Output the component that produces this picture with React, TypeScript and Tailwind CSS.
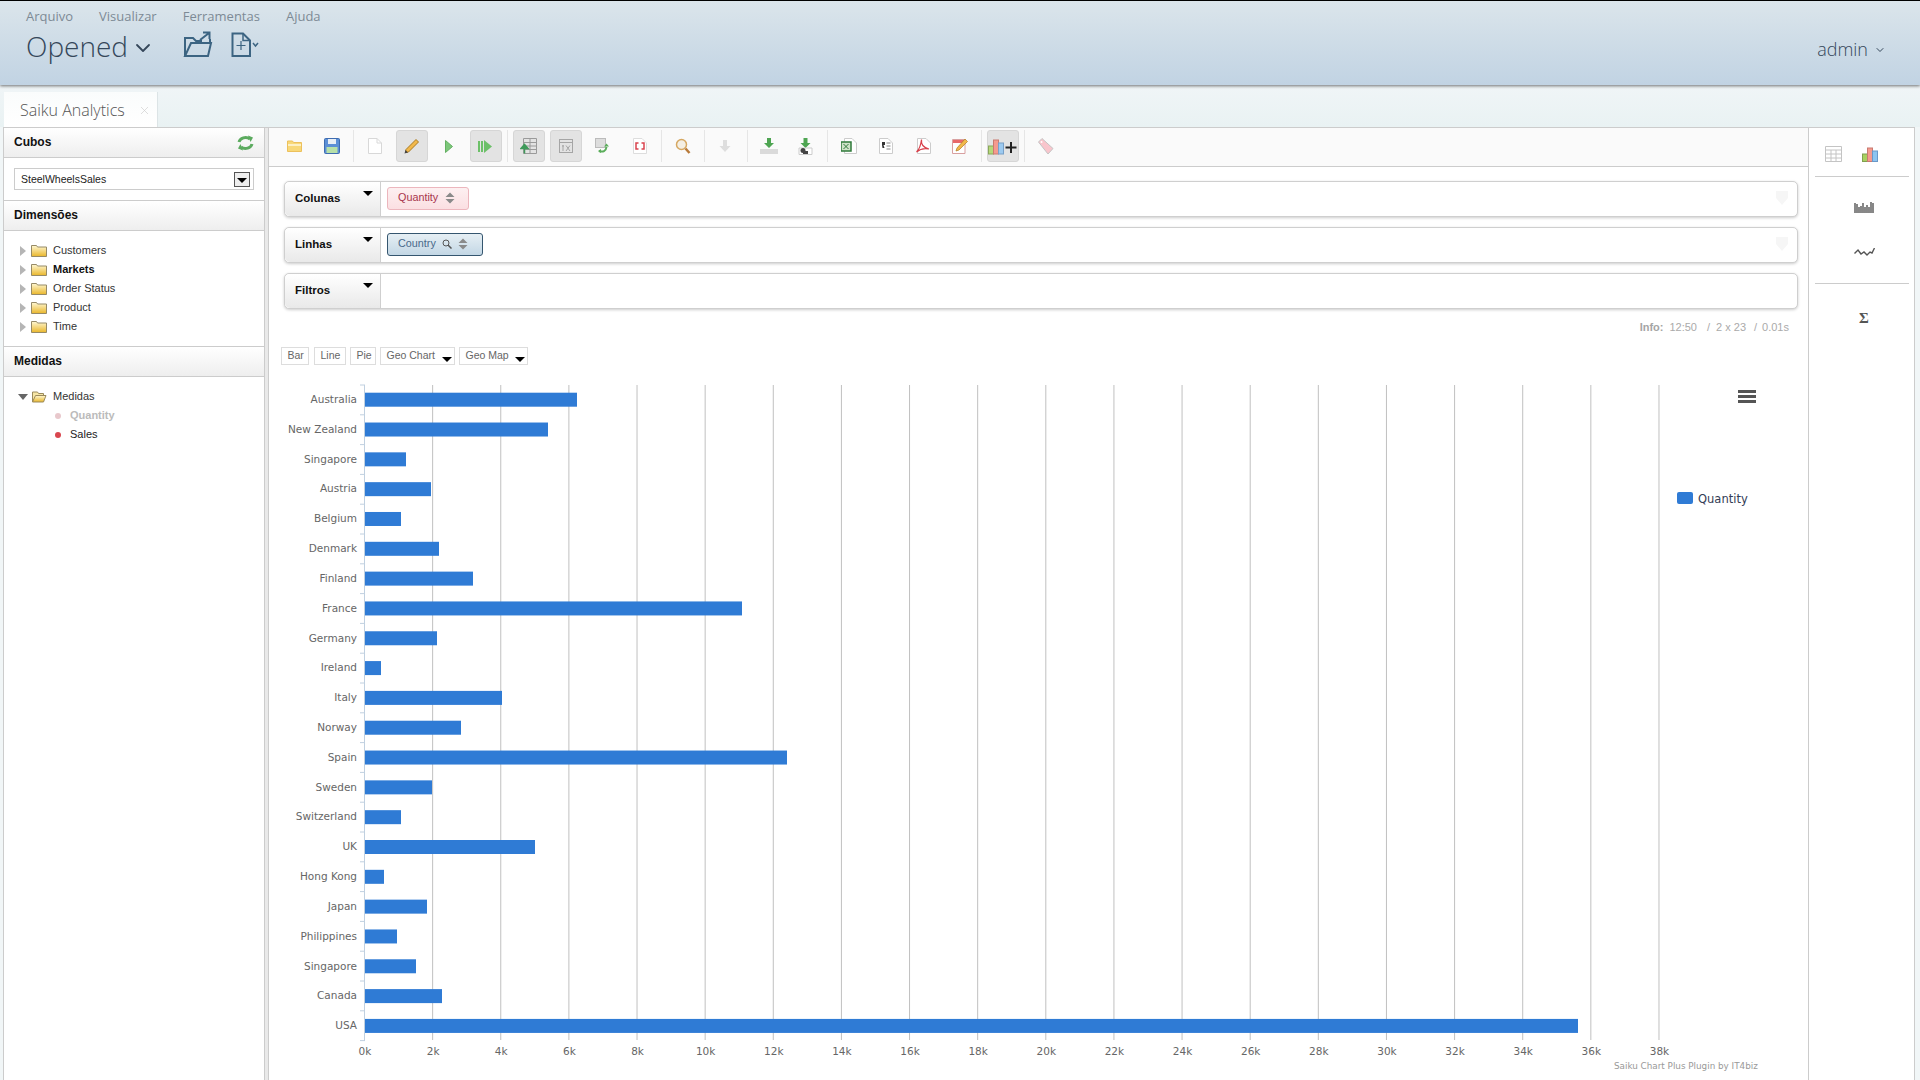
import { ChevronDown, X } from "lucide-react";

const menus = ["Arquivo", "Visualizar", "Ferramentas", "Ajuda"];

const bars: [string, number][] = [
  ["Australia", 577],
  ["New Zealand", 548],
  ["Singapore", 406],
  ["Austria", 431],
  ["Belgium", 401],
  ["Denmark", 439],
  ["Finland", 473],
  ["France", 742],
  ["Germany", 437],
  ["Ireland", 381],
  ["Italy", 502],
  ["Norway", 461],
  ["Spain", 787],
  ["Sweden", 432],
  ["Switzerland", 401],
  ["UK", 535],
  ["Hong Kong", 384],
  ["Japan", 427],
  ["Philippines", 397],
  ["Singapore", 416],
  ["Canada", 442],
  ["USA", 1578],
];

const dimensions = ["Customers", "Markets", "Order Status", "Product", "Time"];

function Tri({ className = "" }: { className?: string }) {
  return (
    <span
      className={`inline-block h-0 w-0 border-x-[5px] border-t-[5px] border-x-transparent border-t-black ${className}`}
    />
  );
}

function FolderIcon({ open = false }: { open?: boolean }) {
  return (
    <svg width="16" height="13" viewBox="0 0 16 13" className="shrink-0">
      <defs>
        <linearGradient id="fold" x1="0" y1="0" x2="0" y2="1">
          <stop offset="0" stopColor="#fff8d4" />
          <stop offset="1" stopColor="#e9b62a" />
        </linearGradient>
      </defs>
      {open ? (
        <>
          <path d="M1.500 12V2h5l1 1.500h5V6" fill="#f6e6a6" stroke="#9a8a5c" />
          <path d="M1.500 12L4.500 5.500H15L12.500 12z" fill="url(#fold)" stroke="#9a8a5c" />
        </>
      ) : (
        <path d="M.5 12.500V1.500h5l1 1.500h9v9.500z" fill="url(#fold)" stroke="#968a66" />
      )}
    </svg>
  );
}

function SideHeader({ title, children }: { title: string; children?: React.ReactNode }) {
  return (
    <div className="flex h-[30px] shrink-0 items-center justify-between border-b border-[#ccc] bg-gradient-to-b from-white to-[#eeeeee] px-[10px] pb-[2px] text-[12px] font-bold text-[#111]">
      <span>{title}</span>
      {children}
    </div>
  );
}

function ToolButton({ active, children }: { active?: boolean; children: React.ReactNode }) {
  return (
    <div className="flex h-[32px] w-[37px] shrink-0 items-center justify-center">
      <div
        className={`flex h-[32px] w-[32px] items-center justify-center rounded-[3px] ${
          active ? "border border-[#d6d6d6] bg-[#e3e3e3]" : ""
        }`}
      >
        {children}
      </div>
    </div>
  );
}

function Sep() {
  return (
    <div className="flex h-[32px] w-[6px] shrink-0 justify-center">
      <div className="h-full w-px bg-[#e6e6e6]" />
    </div>
  );
}

function UpDown() {
  return (
    <svg width="10" height="12" viewBox="0 0 10 12" className="shrink-0">
      <path d="M5 0.500L9.500 5H.5z M5 11.500L.5 7h9z" fill="#8a8a8a" />
    </svg>
  );
}

function DropZone({
  label,
  ghost,
  children,
}: {
  label: string;
  ghost?: boolean;
  children?: React.ReactNode;
}) {
  return (
    <div className="relative ml-[15px] mr-[10px] flex h-[36px] rounded-[5px] border border-[#cfcfcf] bg-white shadow-[0_1px_3px_rgba(0,0,0,0.2)]">
      <div className="relative flex w-[96px] shrink-0 items-center rounded-l-[5px] border-r border-[#cfcfcf] bg-gradient-to-b from-white to-[#e9e9e9] pl-[10px] text-[11.5px] font-bold text-[#111]">
        {label}
        <Tri className="absolute top-[9px] right-[7px] border-x-[4.5px]" />
      </div>
      <div className="flex items-center pb-[2px] pl-[6px]">{children}</div>
      {ghost && (
        <svg width="12" height="14" viewBox="0 0 12 14" className="absolute top-[9px] right-[9px]">
          <path d="M0 0h12v7l-6 7-6-7z" fill="#f6f6f6" />
        </svg>
      )}
    </div>
  );
}

function ChartButton({ width, label, menu }: { width: string; label: string; menu?: boolean }) {
  return (
    <div
      className={`relative flex h-[18px] items-center border border-[#ddd] bg-white pl-[5.5px] text-[10.5px] text-[#666] ${width}`}
    >
      {label}
      {menu && <Tri className="absolute right-[2px] bottom-[2px] border-x-[4px] border-t-[4px]" />}
    </div>
  );
}

function Chart() {
  const ticks = Array.from({ length: 20 }, (_, i) => i);
  return (
    <svg
      width="1539"
      height="710"
      viewBox="269 370 1539 710"
      className="block font-['DejaVu_Sans',sans-serif]"
    >
      {ticks.slice(1).map((i) => (
        <line
          key={i}
          x1={364.5 + i * 68.13}
          x2={364.5 + i * 68.13}
          y1={385}
          y2={1040}
          stroke="#c0c0c0"
        />
      ))}
      <line x1={364.5} x2={364.5} y1={385} y2={1041} stroke="#c0d0e0" />
      {Array.from({ length: 23 }, (_, i) => (
        <line key={i} x1={360} x2={365} y1={385 + i * 29.8} y2={385 + i * 29.8} stroke="#c0d0e0" />
      ))}
      {bars.map(([name, end], i) => (
        <g key={i}>
          <rect x={365} y={392.7 + i * 29.82} width={end - 365} height={14} fill="#2f7bd5" />
          <text x={357} y={403 + i * 29.82} textAnchor="end" fontSize="10.5" fill="#666">
            {name}
          </text>
        </g>
      ))}
      {ticks.map((i) => (
        <text
          key={i}
          x={365 + i * 68.13}
          y={1055}
          textAnchor="middle"
          fontSize="10.5"
          fill="#666"
        >
          {i * 2}k
        </text>
      ))}
      <text x={1614} y={1069} fontSize="8.8" fill="#999">
        Saiku Chart Plus Plugin by IT4biz
      </text>
      <rect x={1738} y={390} width={18} height={3} fill="#555" />
      <rect x={1738} y={395} width={18} height={3} fill="#555" />
      <rect x={1738} y={400} width={18} height={3} fill="#555" />
      <rect x={1677} y={492} width={16} height={12} rx={2} fill="#2f7bd5" />
      <text x={1698} y={503} fontSize="11.5" fill="#333c55">
        Quantity
      </text>
    </svg>
  );
}

export default function App() {
  return (
    <div className="flex h-screen w-full flex-col overflow-hidden bg-[#f1f6f7] font-['Liberation_Sans',Arial,sans-serif]">
      <header className="relative z-10 flex h-[85px] shrink-0 items-start justify-between border-t border-black bg-gradient-to-b from-[#dbe5eb] to-[#c1d3e3] font-['Open_Sans',sans-serif] shadow-[0_1px_3px_rgba(0,0,0,0.55)]">
        <div className="pl-[26px]">
          <div className="flex h-[32px] items-center gap-[26px] text-[13px] text-[#7d8a95]">
            {menus.map((m) => (
              <span key={m}>{m}</span>
            ))}
          </div>
          <div className="mt-[-2px] flex items-center">
            <span className="text-[28px] leading-[30px] font-light text-[#35475a]">Opened</span>
            <ChevronDown size={24} strokeWidth={1.8} className="mt-[3px] ml-[3px] text-[#35475a]" />
            <svg width="30" height="27" viewBox="0 0 30 27" className="mt-[-4px] ml-[28px]" fill="none" stroke="#3c6482" strokeWidth="2">
              <path d="M2 25V7h8l3 3h6" />
              <path d="M2 25H25L28 12H8L2 25z" />
              <path d="M17 9L26 2M20 1.500h6.500V8" />
              <path d="M27 8v4" />
            </svg>
            <svg width="28" height="25" viewBox="0 0 28 25" className="mt-[-3px] ml-[18px]" fill="none" stroke="#3c6482">
              <path d="M1.500 24V1.500H12L19 8.500V24z" strokeWidth="2" />
              <path d="M12 1.500V8.500H19" strokeWidth="1.500" />
              <path d="M10 9v9M5.500 13.500h9" strokeWidth="1.200" />
              <path d="M22 11l2.500 3 2.500-3" strokeWidth="1.500" />
            </svg>
          </div>
        </div>
        <div className="mt-[35px] flex items-center pr-[34px] text-[18px] leading-[26px] font-light text-[#35475a]">
          admin
          <ChevronDown size={12} strokeWidth={2} className="mt-[2px] ml-[6px]" />
        </div>
      </header>

      <div className="flex h-[42px] shrink-0 items-end bg-gradient-to-b from-[#f0f5f7] to-[#e9f2f3] pl-[4px]">
        <div className="flex h-[35px] w-[154px] items-center border-r border-[#dce4e6] bg-gradient-to-b from-[#fafcfc] to-white pt-[1px] pl-[16px] font-['Open_Sans',sans-serif] text-[16px] font-light text-[#555]">
          Saiku Analytics
          <X size={13} strokeWidth={1.2} className="ml-[13px] text-[#ccc]" />
        </div>
      </div>

      <main className="flex min-h-0 flex-1 pr-[5px] pl-[3px]">
        <div className="flex min-w-0 flex-1 border-t border-r border-[#ccc]">
          <aside className="flex w-[262px] shrink-0 flex-col border-x border-[#ccc] bg-white">
            <SideHeader title="Cubos">
              <svg width="17" height="16" viewBox="0 0 17 16" fill="none" strokeWidth="3" stroke="#5cab5f" className="mt-[2px]">
                <path d="M2 7C3 3 9 1 13 4" />
                <path d="M11 .5L16 2.500 13.500 7z" fill="#5cab5f" stroke="none" />
                <path d="M15 9C14 13 8 15 4 12" />
                <path d="M6 15.500L1 13.500 3.500 9z" fill="#5cab5f" stroke="none" />
              </svg>
            </SideHeader>
            <div className="mx-[10px] mt-[10px] flex h-[22px] shrink-0 items-center justify-between border border-[#ccc] pr-[3px] pl-[6px] text-[10.5px] text-[#222]">
              <span className="pt-[2px]">SteelWheelsSales</span>
              <div className="flex h-[15px] w-[16px] items-center justify-center border border-[#555] bg-[#eee]">
                <Tri className="mt-[2px] border-x-[4px] border-t-[4px]" />
              </div>
            </div>
            <div className="mt-[10px] border-t border-[#ccc]">
              <SideHeader title="Dimensões" />
            </div>
            <div className="flex flex-col pt-[10px] pb-[10px] pl-[16px] text-[11px] text-[#333]">
              {dimensions.map((d) => (
                <div key={d} className="flex h-[19px] items-center">
                  <span className="h-0 w-0 border-y-[5px] border-l-[6px] border-y-transparent border-l-[#b5b5b5]" />
                  <span className="ml-[5px]">
                    <FolderIcon />
                  </span>
                  <span className={`ml-[6px] ${d === "Markets" ? "font-bold text-[#111]" : ""}`}>{d}</span>
                </div>
              ))}
            </div>
            <div className="border-t border-[#ccc]">
              <SideHeader title="Medidas" />
            </div>
            <div className="flex flex-col pt-[10px] pl-[14px] text-[11px] text-[#333]">
              <div className="flex h-[19px] items-center">
                <span className="h-0 w-0 border-x-[5px] border-t-[6px] border-x-transparent border-t-[#666]" />
                <span className="ml-[3px]">
                  <FolderIcon open />
                </span>
                <span className="ml-[6px]">Medidas</span>
              </div>
              <div className="flex h-[19px] items-center pl-[37px] font-bold text-[#bbb]">
                <span className="h-[6px] w-[6px] rounded-full bg-[#e8c8cc]" />
                <span className="ml-[9px]">Quantity</span>
              </div>
              <div className="flex h-[19px] items-center pl-[37px] text-[#222]">
                <span className="h-[6px] w-[6px] rounded-full bg-[#d9474f]" />
                <span className="ml-[9px]">Sales</span>
              </div>
            </div>
          </aside>

          <div className="w-[3px] shrink-0 bg-[#e9e9e9]" />

          <section className="flex min-w-0 flex-1 flex-col border-l border-[#ccc] bg-white">
            <div className="flex h-[39px] shrink-0 items-center border-b border-[#ccc] bg-[#fafafa] pb-[2px] pl-[7px]">
              <ToolButton>
                <svg width="15" height="12" viewBox="0 0 15 12">
                  <path d="M.5 11.500V1h5l1 1.500h8v9z" fill="#f8d878" stroke="#ecc05c" />
                  <path d="M1 5h13" stroke="#fdf0c4" strokeWidth="2" />
                </svg>
              </ToolButton>
              <ToolButton>
                <svg width="16" height="16" viewBox="0 0 16 16">
                  <rect x=".5" y=".5" width="15" height="15" rx="1" fill="#5b8fd6" stroke="#3e6cb0" />
                  <rect x="4" y="1" width="8" height="5" fill="#e8eef6" />
                  <rect x="2.500" y="9" width="11" height="6" fill="#b7e0a8" />
                </svg>
              </ToolButton>
              <Sep />
              <ToolButton>
                <svg width="14" height="16" viewBox="0 0 14 16" fill="#fff" stroke="#d8d8d8">
                  <path d="M.5.500H9L13.500 5v10.500H.5z" />
                  <path d="M9 .5V5h4.500" fill="none" />
                </svg>
              </ToolButton>
              <ToolButton active>
                <svg width="17" height="17" viewBox="0 0 17 17">
                  <path d="M13 1.500L15.500 4 5.500 14 2.500 14.500 3 11.500z" fill="#f2b84a" stroke="#a87a22" />
                  <path d="M1.500 15.500L2.500 12 5 14.500z" fill="#444" />
                </svg>
              </ToolButton>
              <ToolButton>
                <svg width="8" height="13" viewBox="0 0 8 13">
                  <path d="M.5.500L7.500 6.500.5 12.500z" fill="#7cc77a" stroke="#64b062" />
                </svg>
              </ToolButton>
              <ToolButton active>
                <svg width="15" height="13" viewBox="0 0 15 13" fill="#6cc068">
                  <rect x="0" y="1" width="2" height="11" />
                  <rect x="3" y="1" width="2" height="11" />
                  <path d="M6 0L14 6.500 6 13z" />
                </svg>
              </ToolButton>
              <Sep />
              <ToolButton active>
                <svg width="17" height="16" viewBox="0 0 17 16" fill="none" stroke="#9a9a9a">
                  <path d="M3.500.5h13v15h-13zM3.500 4.500h13M3.500 8h13M3.500 11.500h13M10 .5v15" />
                  <path d="M4.500 15.500V9M1 10.500L4.500 6.500 8 10.500z" stroke="#3f9a5a" strokeWidth="1.500" fill="#3f9a5a" />
                </svg>
              </ToolButton>
              <ToolButton active>
                <svg width="14" height="14" viewBox="0 0 14 14" fill="none" stroke="#a5a5a5">
                  <rect x=".5" y=".5" width="13" height="13" />
                  <path d="M.5 3.500h13M4 6v6M3 7h2M7 6.500l4 5.500M11 6.500L7 12" />
                </svg>
              </ToolButton>
              <ToolButton>
                <svg width="15" height="16" viewBox="0 0 15 16" fill="none">
                  <rect x=".5" y=".5" width="10" height="9" fill="#ddd" stroke="#bbb" />
                  <path d="M4 13c4 1.500 7 0 7.500-4" stroke="#5bae5b" strokeWidth="2" />
                  <path d="M9 8.500l2.500-3 2.500 3z" fill="#5bae5b" />
                  <path d="M6 11l-3 2 3 2z" fill="#5bae5b" />
                </svg>
              </ToolButton>
              <ToolButton>
                <svg width="14" height="16" viewBox="0 0 14 16" fill="none">
                  <path d="M.5.500H9L13.500 5v10.500H.5z" fill="#fff" stroke="#ddd" />
                  <path d="M5.500 5H3v6h2.500M8.500 5H11v6H8.500" stroke="#d9434e" strokeWidth="1.500" />
                </svg>
              </ToolButton>
              <Sep />
              <ToolButton>
                <svg width="16" height="17" viewBox="0 0 16 17" fill="none">
                  <circle cx="6.500" cy="6.500" r="5" fill="#f4efe4" stroke="#d6a862" strokeWidth="1.500" />
                  <path d="M10.500 10.500L14.500 15" stroke="#b87a3a" strokeWidth="2.500" />
                </svg>
              </ToolButton>
              <Sep />
              <ToolButton>
                <svg width="13" height="13" viewBox="0 0 13 13" fill="#dedede">
                  <path d="M4 0h4v6h3.500L6 12 .5 6H4z" />
                </svg>
              </ToolButton>
              <Sep />
              <ToolButton>
                <svg width="18" height="17" viewBox="0 0 18 17">
                  <path d="M7 0h4v5h3l-5 5-5-5h3z" fill="#4ea552" />
                  <rect x="0" y="11" width="18" height="5" fill="#dadada" />
                </svg>
              </ToolButton>
              <ToolButton>
                <svg width="15" height="17" viewBox="0 0 15 17">
                  <path d="M5.500 0h4v5h3l-5 5-5-5h3z" fill="#4ea552" />
                  <path d="M1 16.500V10h13v6.500z" fill="#fff" stroke="#ccc" />
                  <circle cx="5" cy="12.500" r="2.500" fill="#444" />
                  <rect x="5" y="13" width="5" height="3" fill="#444" />
                </svg>
              </ToolButton>
              <Sep />
              <ToolButton>
                <svg width="16" height="16" viewBox="0 0 16 16">
                  <path d="M3.500.5H11L15.500 5v10.500h-12z" fill="#fff" stroke="#ccc" />
                  <rect x="0" y="4" width="10" height="9" fill="#cfe3c8" stroke="#2f7a3a" strokeWidth="1.500" />
                  <path d="M2.500 6l5 5M7.500 6l-5 5" stroke="#2f7a3a" />
                </svg>
              </ToolButton>
              <ToolButton>
                <svg width="14" height="16" viewBox="0 0 14 16" fill="none">
                  <path d="M.5.500H9L13.500 5v10.500H.5z" fill="#fff" stroke="#ccc" />
                  <path d="M3 4h3v3H4.500l1 3H3.500L3 7z" fill="#333" />
                  <path d="M7.500 5h4M7.500 8h4M7.500 11h4" stroke="#888" />
                </svg>
              </ToolButton>
              <ToolButton>
                <svg width="16" height="16" viewBox="0 0 16 16" fill="none">
                  <path d="M2.500.5H11L15.500 5v10.500h-13z" fill="#fff" stroke="#ccc" />
                  <path d="M6.500 1.500c-.5 4 1 8 7.500 9.500-4-1-9 0-12.500 3 3-3 4.500-8 5-12.500z" stroke="#d8404a" strokeWidth="1.200" />
                </svg>
              </ToolButton>
              <ToolButton>
                <svg width="16" height="16" viewBox="0 0 16 16">
                  <path d="M.5 1.500h12.500v14H.5z" fill="#fff" stroke="#d8a0a0" />
                  <rect x="1" y="2" width="11" height="3" fill="#e8686a" />
                  <path d="M13 1L15.500 3.500 7 12l-3 1 1-3z" fill="#f2b84a" stroke="#b07c22" strokeWidth=".7" />
                </svg>
              </ToolButton>
              <Sep />
              <ToolButton active>
                <svg width="30" height="17" viewBox="0 0 30 17">
                  <rect x=".5" y="8" width="5" height="8" fill="#b6d87a" stroke="#8aa85a" />
                  <rect x="5.500" y="2" width="5" height="14" fill="#f59a8e" stroke="#c97a70" />
                  <rect x="10.500" y="5" width="5" height="11" fill="#9ccaf0" stroke="#78a0c8" />
                  <path d="M23 4v11M17.500 9.500h11" stroke="#222" strokeWidth="2" />
                </svg>
              </ToolButton>
              <Sep />
              <ToolButton>
                <svg width="17" height="17" viewBox="0 0 17 17">
                  <path d="M1.500 4L5 .5 16 10.500 11 16z" fill="#f9c5cc" stroke="#c4c4c4" />
                  <circle cx="4.500" cy="4" r="1" fill="#fff" />
                </svg>
              </ToolButton>
            </div>

            <div className="flex flex-col gap-[10px] pt-[14px]">
              <DropZone label="Colunas" ghost>
                <div className="flex h-[23px] w-[82px] items-center gap-[7px] rounded-[3px] border border-[#ecb6bd] bg-gradient-to-b from-[#fdf0f1] to-[#fbdfe2] pl-[10px] text-[10.8px] text-[#a8354c]">
                  <span className="pb-[2px]">Quantity</span>
                  <UpDown />
                </div>
              </DropZone>
              <DropZone label="Linhas" ghost>
                <div className="flex h-[23px] w-[96px] items-center rounded-[3px] border border-[#35566f] bg-gradient-to-b from-[#e6eff4] to-[#c3d7e5] pl-[10px] text-[10.8px] text-[#48698a]">
                  <span className="pb-[2px]">Country</span>
                  <svg width="10" height="10" viewBox="0 0 10 10" fill="none" stroke="#555" className="mr-[6px] ml-[6px] shrink-0">
                    <circle cx="4" cy="4" r="3" />
                    <path d="M6 6l3.500 3.500" strokeWidth="1.500" />
                  </svg>
                  <UpDown />
                </div>
              </DropZone>
              <DropZone label="Filtros" />
            </div>

            <div className="mt-[10px] flex h-[16px] shrink-0 items-center justify-end pr-[19px] text-[11px] text-[#aaa]">
              <b className="mr-[6px] text-[#a5a5a5]">Info:</b>
              <span>12:50</span>
              <span className="ml-[10px]">/</span>
              <span className="ml-[6px]">2 x 23</span>
              <span className="ml-[8px]">/</span>
              <span className="ml-[5px]">0.01s</span>
            </div>

            <div className="mt-[12px] flex shrink-0 gap-[4px] pl-[12px]">
              <ChartButton width="mr-[1px] w-[28px]" label="Bar" />
              <ChartButton width="w-[32px]" label="Line" />
              <ChartButton width="w-[26px]" label="Pie" />
              <ChartButton width="w-[75px]" label="Geo Chart" menu />
              <ChartButton width="w-[69px]" label="Geo Map" menu />
            </div>

            <div className="mt-[5px]">
              <Chart />
            </div>
          </section>

          <aside className="flex w-[106px] shrink-0 flex-col items-center border-l border-[#ccc] bg-white">
            <div className="flex h-[49px] w-[94px] shrink-0 items-center justify-center gap-[20px] border-b border-[#ccc] pt-[4px] pr-[20px]">
              <svg width="17" height="16" viewBox="0 0 17 16" fill="none" stroke="#c4c4c4">
                <path d="M.5.500h16v15H.5zM.5 4h16M.5 8h16M.5 12h16M6 4v11.500M11 4v11.500" />
              </svg>
              <svg width="16" height="15" viewBox="0 0 16 15">
                <rect x=".5" y="7" width="5" height="7.500" fill="#a8d060" stroke="#80a050" />
                <rect x="5.500" y="1" width="5" height="13.500" fill="#f59a8e" stroke="#c97a70" />
                <rect x="10.500" y="4" width="5" height="10.500" fill="#8cc4f0" stroke="#6a98c8" />
              </svg>
            </div>
            <div className="flex h-[107px] w-[94px] shrink-0 flex-col items-center gap-[35px] border-b border-[#ccc] pt-[24px] pl-[5px]">
              <svg width="20" height="12" viewBox="0 0 20 12" fill="none" stroke="#555" strokeWidth="1.400">
                <path d="M1 12V2M3 12V3M5 12V6M7 12V5M9 12V2M11 12V6M13 12V4M15 12V6M17 12V1M19 12V2" />
              </svg>
              <svg width="21" height="9" viewBox="0 0 21 9" fill="none" stroke="#555" strokeWidth="1.400">
                <path d="M.5 5.500L4 2l3 4 3-2 3 3 3-3 2 1 2.500-5" />
              </svg>
            </div>
            <div className="pt-[21px] pl-[5px] font-['Liberation_Serif',serif] text-[15px] leading-[26px] font-bold text-[#555]">
              Σ
            </div>
          </aside>
        </div>
      </main>
    </div>
  );
}
